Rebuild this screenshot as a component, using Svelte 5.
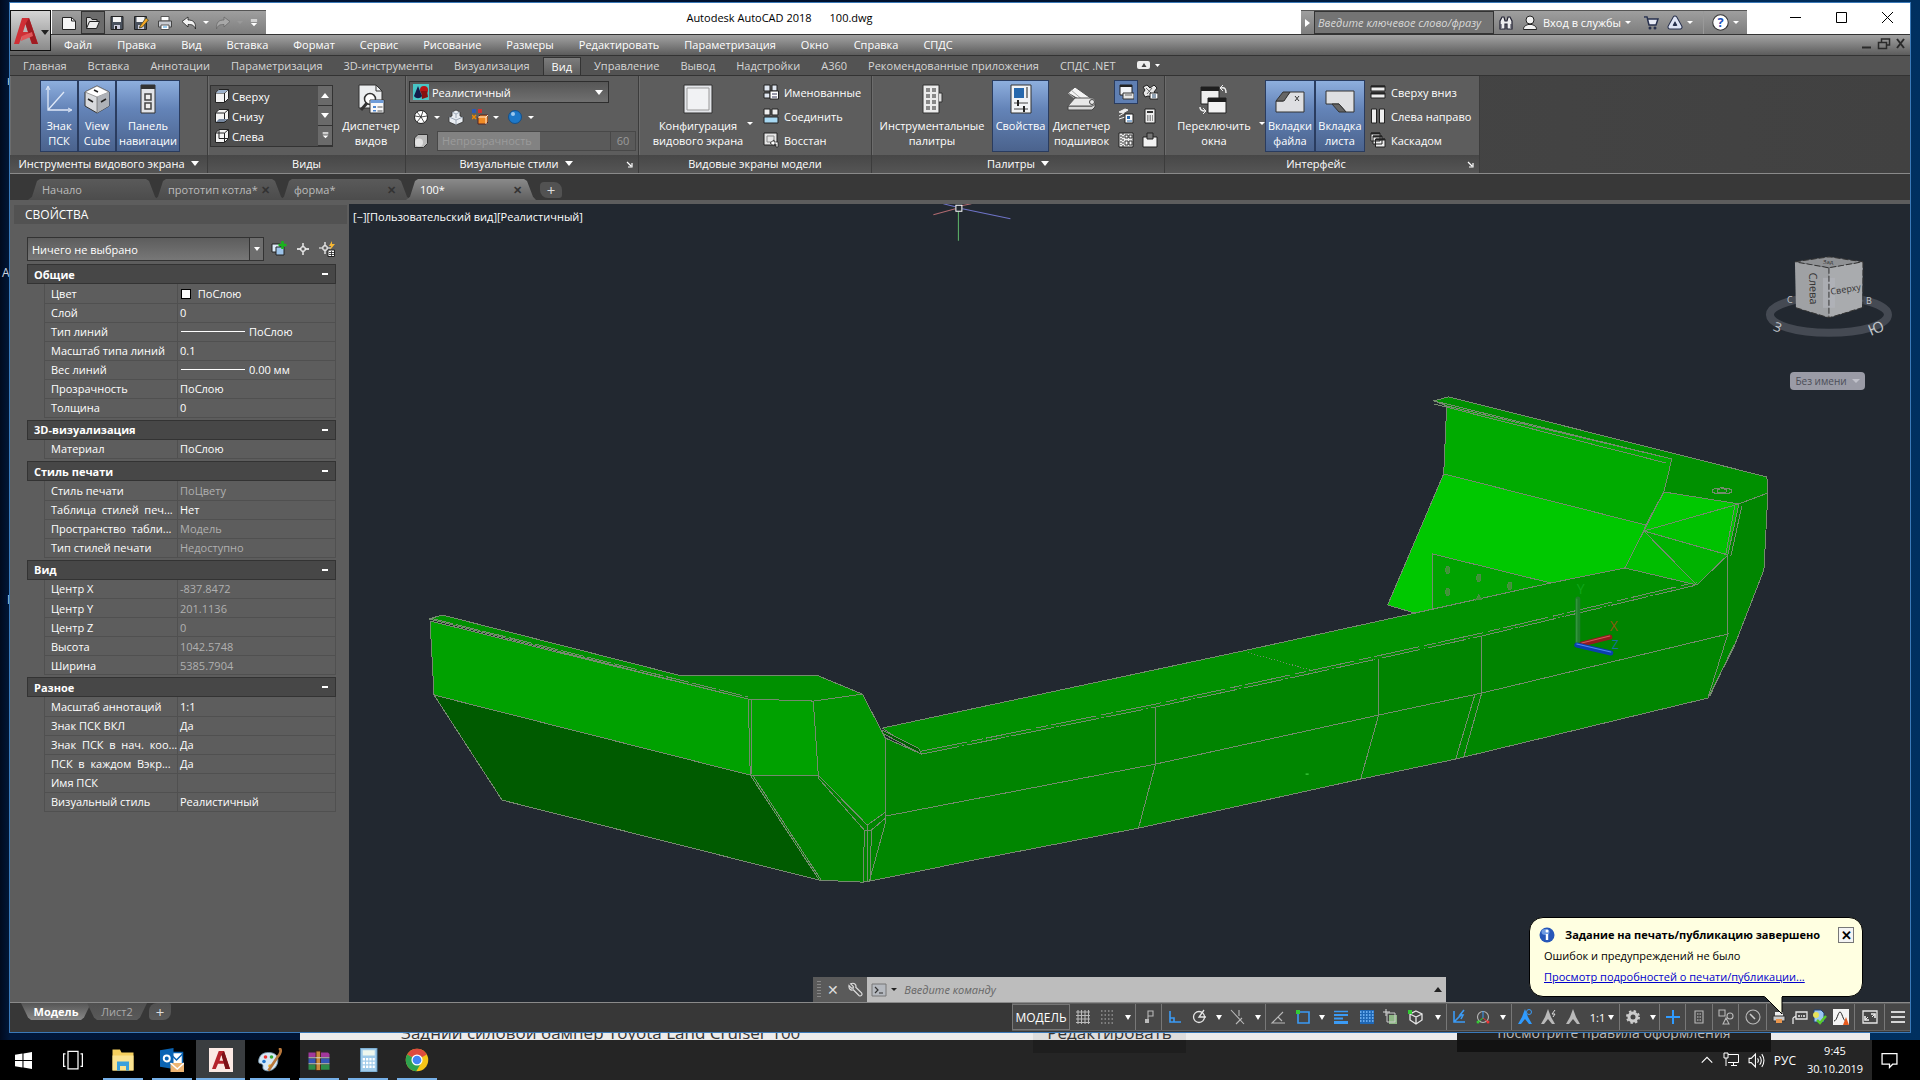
<script lang="ts">
  type Row = { name: string; value: string; dim?: boolean; kind?: string };

  const menus = ['Файл', 'Правка', 'Вид', 'Вставка', 'Формат', 'Сервис', 'Рисование', 'Размеры', 'Редактировать', 'Параметризация', 'Окно', 'Справка', 'СПДС'];
  const ribbonTabs = ['Главная', 'Вставка', 'Аннотации', 'Параметризация', '3D-инструменты', 'Визуализация', 'Вид', 'Управление', 'Вывод', 'Надстройки', 'A360', 'Рекомендованные приложения', 'СПДС .NET'];

  const groups: { title: string; rows: Row[] }[] = [
    {
      title: 'Общие',
      rows: [
        { name: 'Цвет', value: 'ПоСлою', kind: 'color' },
        { name: 'Слой', value: '0' },
        { name: 'Тип линий', value: 'ПоСлою', kind: 'line' },
        { name: 'Масштаб типа линий', value: '0.1' },
        { name: 'Вес линий', value: '0.00 мм', kind: 'line' },
        { name: 'Прозрачность', value: 'ПоСлою' },
        { name: 'Толщина', value: '0' }
      ]
    },
    { title: '3D-визуализация', rows: [{ name: 'Материал', value: 'ПоСлою' }] },
    {
      title: 'Стиль печати',
      rows: [
        { name: 'Стиль печати', value: 'ПоЦвету', dim: true },
        { name: 'Таблица  стилей  печ...', value: 'Нет' },
        { name: 'Пространство  табли...', value: 'Модель', dim: true },
        { name: 'Тип стилей печати', value: 'Недоступно', dim: true }
      ]
    },
    {
      title: 'Вид',
      rows: [
        { name: 'Центр X', value: '-837.8472', dim: true },
        { name: 'Центр Y', value: '201.1136', dim: true },
        { name: 'Центр Z', value: '0', dim: true },
        { name: 'Высота', value: '1042.5748', dim: true },
        { name: 'Ширина', value: '5385.7904', dim: true }
      ]
    },
    {
      title: 'Разное',
      rows: [
        { name: 'Масштаб аннотаций', value: '1:1' },
        { name: 'Знак ПСК ВКЛ', value: 'Да' },
        { name: 'Знак  ПСК  в  нач.  коо...', value: 'Да' },
        { name: 'ПСК  в  каждом  Вэкр...', value: 'Да' },
        { name: 'Имя ПСК', value: '' },
        { name: 'Визуальный стиль', value: 'Реалистичный' }
      ]
    }
  ];

  // icon, cell width, ends a group
  const status: [string, number, boolean][] = [
    ['grid', 26, false], ['snap', 24, false], ['arrow', 16, true],
    ['infer', 26, true], ['ortho', 25, false], ['polar', 25, false], ['arrow', 14, false],
    ['iso', 24, false], ['arrow', 16, true], ['angle', 24, false], ['osnap', 25, false], ['arrow', 13, false],
    ['weight', 26, false], ['transp', 25, false], ['cycle', 24, false], ['osnap3d', 26, false], ['arrow', 18, true],
    ['ducs', 23, false], ['gizmo', 25, false], ['arrow', 17, true],
    ['annoA', 25, false], ['annoB', 24, false], ['annoC', 24, false], ['scale', 35, true],
    ['gear', 26, false], ['arrow', 14, true], ['plus', 26, true], ['units', 27, true], ['isolate', 26, true], ['perf', 28, true],
    ['plot', 23, false], ['xref', 20, false], ['trust', 18, false], ['graph', 27, true], ['full', 30, true], ['burger', 25, false]
  ];

  const w = 'fill="none" stroke="#e6e6e6" stroke-width="1.3"';
  const b = 'fill="none" stroke="#3b9bf5" stroke-width="1.6"';
  const g = 'fill="none" stroke="#b9b9b9" stroke-width="1.1"';
  const k = 'stroke="#222"';

  const icons: Record<string, string> = {
    new: `<path d="M1.500 2.500h9l4 3.500v8.500h-13z" fill="#f5f5f5" ${k}/><path d="M10.500 2.500v3.500h4" fill="none" ${k}/>`,
    open: `<path d="M1.500 13.500v-11h4l1.500 2h5v2" fill="#ddd" ${k}/><path d="M1.500 13.500l3-7h10l-3 7z" fill="#eee" ${k}/>`,
    save: `<path d="M2 1.500h12v13H2z" fill="#4a525e" stroke="#222"/><path d="M4 2h8v5H4z" fill="#f4f4f4"/><path d="M5 10h6v4H5z" fill="#ccd"/><path d="M6 11h2v3H6z" fill="#222"/>`,
    saveas: `<path d="M1.500 1.500h12v13h-12z" fill="#4a525e" stroke="#222"/><path d="M3.500 2h8v5h-8z" fill="#f4f4f4"/><path d="M5 10h6v4H5z" fill="#ccd"/><path d="M7 11l6-8 2.500 2-6 7-3 1z" fill="#f5a623" stroke="#553"/>`,
    print: `<path d="M4 1.500h8V6H4z" fill="#fff" stroke="#555"/><path d="M1.500 6h13v6h-13z" fill="#c9ccd2" stroke="#444"/><path d="M4 10h8v4.500H4z" fill="#fff" stroke="#555"/><path d="M6 12h4" stroke="#3a9be0"/>`,
    undo: `<path d="M1 6.500l6-4.500v3c5 0 8 2 7.500 9-1.500-4-3.500-4.500-7.500-4.500v2.500z" fill="#f2f2f2" ${k} stroke-width=".8"/>`,
    redo: `<path d="M15 6.500L9 2v3c-5 0-8 2-7.500 9C3 10 5 9.500 9 9.500V12z" fill="#a8a8a8" stroke="#6a6a6a" stroke-width=".8"/>`,
    more: `<path d="M3 3h10M3 5h10" stroke="#fff" stroke-width="1.500"/><path d="M3 8h10l-5 5z" fill="#fff"/>`,
    find: `<path d="M2 14V6l2-4h2l1 4h2l1-4h2l2 4v8H9V9H7v5z" fill="#eee" stroke="#223" stroke-width="1.200"/><path d="M3 9v4M13 9v4" stroke="#334"/>`,
    user: `<circle cx="8" cy="5" r="4" fill="#f2f2f2" stroke="#222"/><path d="M1.500 14.500c0-4 3-4 4.500-5h4c1.500 1 4.500 1 4.500 5z" fill="#f2f2f2" stroke="#222"/>`,
    cart: `<path d="M1 2h3l2 8h7l2-6H5" fill="#e8ebf5" stroke="#27304d" stroke-width="1.500"/><circle cx="7" cy="13" r="1.500" fill="#27304d"/><circle cx="12" cy="13" r="1.500" fill="#27304d"/>`,
    a360: `<path d="M8 3l5 9H3z" fill="none" stroke="#27304d" stroke-width="5" stroke-linejoin="round"/><path d="M8 3l5 9H3z" fill="none" stroke="#dfe5f5" stroke-width="3" stroke-linejoin="round"/><path d="M8 7l2 4H6z" fill="#27304d"/>`,
    help: `<circle cx="8" cy="8" r="7.300" fill="#fff" stroke="#333"/><text x="8" y="12" text-anchor="middle" font-size="12" font-weight="bold" fill="#1d50b8">?</text>`,
    ucs: `<path d="M4 3v23h23M4 26L20 8" fill="none" stroke="#dfe8f7" stroke-width="1.300"/><path d="M2 6l2-4 2 4M24 24l4 2-4 2" fill="none" stroke="#dfe8f7"/>`,
    cube: `<path d="M15 2l12 6v14l-12 7-12-7V8z" fill="#d9dbde" stroke="#333"/><path d="M15 2l12 6-12 5L3 8z" fill="#fff" stroke="#777" stroke-width=".7"/><path d="M15 13v16l12-7V8z" fill="#aeb2b8"/><path d="M15 13v16" stroke="#666" stroke-width=".7"/><path d="M12 6l4 2M6 15l5 3M19 18l5-3" stroke="#222" stroke-width="1.500"/>`,
    nav: `<path d="M8 1h14v28H8z" fill="#e2e4e8" stroke="#333"/><path d="M8 1h14v4H8z" fill="#333"/><path d="M12 10h6v6h-6zM12 19h6v6h-6z" fill="#eee" stroke="#444" stroke-width="1.500"/>`,
    views: `<path d="M3 1h17l6 6v17H3z" fill="#eceef0" stroke="#333"/><path d="M20 1v6h6" fill="none" stroke="#333"/><circle cx="14" cy="15" r="5.500" fill="#fff" stroke="#333" stroke-width="1.500"/><path d="M11 19l-6 7" stroke="#333" stroke-width="3"/><path d="M14 16h14v13H14z" fill="#f6f7f9" stroke="#333"/><path d="M14.500 16h13v3h-13z" fill="#6d9bd8"/><path d="M17 22h3v2h-3zM17 26h3v1.500h-3z" fill="#4a84cf"/><path d="M21.500 23h5M21.500 27h5" stroke="#555"/>`,
    vp: `<path d="M1 1h28v28H1z" fill="#e4e6ea" stroke="#333"/><path d="M4 4h22v22H4z" fill="#f1f2f4" stroke="#999"/>`,
    toolpal: `<path d="M6 1h16v28H6z" fill="#ececec" stroke="#333"/><path d="M22 9h3v9h-3" fill="#ddd" stroke="#333"/><path d="M9 4h4v4H9zM15 4h4v4h-4zM9 10h4v4H9zM15 10h4v4h-4zM9 16h4v4H9zM15 16h4v4h-4zM9 22h4v4H9zM15 22h4v4h-4z" fill="#888"/>`,
    props: `<path d="M5 1h20v28H5z" fill="#f1f3f6" stroke="#333"/><path d="M8 4h10v10H8z" fill="#2768ad"/><path d="M21 3v11" stroke="#888" stroke-width="2"/><path d="M8 19h14M8 25h14" stroke="#444"/><path d="M12 16v6M18 22v6" stroke="#222" stroke-width="2"/>`,
    sheets: `<path d="M1 9l7-6 17 12v8z" fill="#f4f4f4" stroke="#555"/><path d="M1 9l11 9M4 6l13 11" stroke="#aaa"/><path d="M1 22h24l3-3v4l-3 3H1z" fill="#d7d7d7" stroke="#444"/><path d="M8 14L1 22h24c5-1 4-8-1-8z" fill="#e8e8e8" stroke="#555"/><circle cx="25" cy="18" r="2.500" fill="none" stroke="#444"/>`,
    swwin: `<path d="M2 3h18v17H2z" fill="#eee" stroke="#222"/><path d="M2 3h18v4H2z" fill="#1e1e1e"/><path d="M9 14h18v15H9z" fill="#f3f3f3" stroke="#222"/><path d="M9 14h18v4H9z" fill="#1e1e1e"/><path d="M22 4c4-1 5 1 5 5M1 23c0 3 2 4 5 4" fill="none" stroke="#eee" stroke-width="1.500"/><path d="M24 1l-3 3 3 3M4 24l3 3-3 3" fill="none" stroke="#eee"/>`,
    filetab: `<path d="M1 28V17h7l7-9h14v20z" fill="#dedfe2" stroke="#333"/><path d="M1 17l7-9h7l-6 9z" fill="#666" stroke="#333"/><path d="M20 12l4 5M24 12l-4 5" stroke="#333"/>`,
    laytab: `<path d="M1 7h28v21h-8l-7-8H1z" fill="#dedfe2" stroke="#333"/><path d="M7 20h7l7 8h-7z" fill="#666" stroke="#333"/>`,
    top: `<path d="M5 1.500h9.500v9L10.500 14.500h-9V5z" fill="#f4f4f4" stroke="#222"/><path d="M1.500 5H10.500V14.500M10.500 5l4-3.500" fill="none" stroke="#222"/><path d="M5 2l9 0-4 3H2z" fill="#9db2cc"/>`,
    bottom: `<path d="M5 1.500h9.500v9L10.500 14.500h-9V5z" fill="#f4f4f4" stroke="#222"/><path d="M1.500 5H10.500V14.500M10.500 5l4-3.500" fill="none" stroke="#222"/><path d="M5 11h9l-4 3H2z" fill="#7788a0"/>`,
    left: `<path d="M5 1.500h9.500v9L10.500 14.500h-9V5z" fill="#f4f4f4" stroke="#222"/><path d="M1.500 5H10.500V14.500M10.500 5l4-3.500M5 1.500v9M5 10.500H14" fill="none" stroke="#222"/>`,
    real: `<path d="M0 0h16v16H0z" fill="#48c6c6"/><circle cx="11" cy="6" r="4" fill="#b81313"/><path d="M8 7h6l1 6-6 2z" fill="#861010"/><path d="M5 2l4 10c-2 3-6 3-8 0z" fill="#141a4a"/>`,
    shade: `<circle cx="8" cy="8" r="6.500" fill="#fff" stroke="#222"/><path d="M8 8L4 3M8 8l2-6M8 8l6-1M8 8l3 5M8 8l-4 5M8 8L2 7" stroke="#222" stroke-width=".8"/>`,
    cubes: `<path d="M8 1l4 2v4l3 1v5l-7 3-7-3V8l3-1V3z" fill="#e9edf2" stroke="#333" stroke-width=".8"/><path d="M4 3l4 2 4-2M8 5v4M1 8l7 3 7-3M8 11v5" fill="none" stroke="#8a97a8" stroke-width=".8"/>`,
    mats: `<path d="M0 0h4v4H0z" fill="#2c59b5"/><path d="M6 0h4v4H6z" fill="#c33"/><path d="M0 6l4 4M4 6l-4 4" stroke="#e80" stroke-width="1.500"/><path d="M6 8l2-2h8v7l-2 2H6z" fill="#f08a24" stroke="#522"/><path d="M6 8h8v7M14 8l2-2" fill="none" stroke="#fff" stroke-width=".8"/>`,
    sphere: `<circle cx="8" cy="8" r="6.500" fill="#1e78c8" stroke="#155089"/><circle cx="6" cy="5" r="2" fill="#9cc8ee"/>`,
    opac: `<path d="M5 1.500h9.500v9L10.500 14.500h-9V5z" fill="#bbb" stroke="#333"/><circle cx="6" cy="9.500" r="4" fill="#e2e2e2"/>`,
    named: `<path d="M1 1h6v6H1zM9 1h5v6H9zM1 9h6v5H1z" fill="#dfe6f0" stroke="#222"/><path d="M7 7h8.500v8H7z" fill="#fff" stroke="#222"/><path d="M9 10h5M9 13h5" stroke="#335"/>`,
    join: `<path d="M1 1h6v6H1zM9 1h6v6H9z" fill="#eee" stroke="#222"/><path d="M1 9h14v6H1z" fill="#a7d8f2" stroke="#222"/>`,
    restore: `<path d="M1 1h13v12H1z" fill="#e6e6e6" stroke="#222"/><path d="M4 4h7v6H4z" fill="none" stroke="#888"/><path d="M7 11l4-3v2h4v5h-2v-3h-2v2z" fill="#fff" stroke="#222" stroke-width=".8"/>`,
    tile: `<path d="M1 2h14v5H1zM1 9h14v5H1z" fill="#eee" stroke="#222"/><path d="M1 2.500h14M1 9.500h14" stroke="#222" stroke-width="2"/>`,
    tilev: `<path d="M1.500 1h5v14h-5zM9.500 1h5v14h-5z" fill="#eee" stroke="#222"/>`,
    cascade: `<path d="M1 1h9v8H1zM3 4h9v8H3zM5.500 7H15v8H5.500z" fill="#eee" stroke="#222"/><path d="M1 1.500h9M3 4.500h9M6 7.500h9" stroke="#222" stroke-width="2"/>`,
    p1: `<path d="M2 1h12v10H2z" fill="#f2f4f8" stroke="#222"/><path d="M2 2h12" stroke="#222" stroke-width="2"/><path d="M5 9h11v6H5z" fill="#e4e4e4" stroke="#333"/><path d="M7 11h7" stroke="#666"/>`,
    p2: `<path d="M1 3l4-2 3 3 4-3 3 3-3 4 2 3-4 2-4-1-3 1-2-4 2-3z" fill="#e8e8e8" stroke="#222"/><path d="M4 4l6 6M10 4l-5 6" stroke="#333" stroke-width=".7"/><path d="M8 9h8v6H8z" fill="#fff" stroke="#222"/><path d="M10 11h4M10 13h4" stroke="#246"/>`,
    p3: `<path d="M1 4l6-3 3 1-5 3zM1 8l5-3M1 11l6-2" fill="#eee" stroke="#eee"/><path d="M7 6h8v9H7z" fill="#fff" stroke="#222"/><path d="M9 8h3v3H9z" fill="#2768ad"/><path d="M9 13h5" stroke="#2768ad"/>`,
    p4: `<path d="M3 1h10v14H3z" fill="#eee" stroke="#222"/><path d="M5 3h6v2H5z" fill="#333"/><path d="M5 8h6M5 10h6M5 12h6" stroke="#333" stroke-dasharray="1.500 1"/>`,
    p5: `<path d="M1 1h14v14H1z" fill="#eee" stroke="#222"/><path d="M3 3v10M5 1v14" stroke="#333" stroke-dasharray="2 1"/><path d="M7 3h3v3H7zM11 3h3v3h-3zM7 9h3v4H7zM11 9h3v4h-3z" fill="#fff" stroke="#333"/>`,
    p6: `<path d="M1 5h14v10H1z" fill="#f2f2f2" stroke="#222"/><path d="M5 1h6v6H5z" fill="#777" stroke="#222"/>`,
    pick1: `<path d="M1 3h8v8H1z" fill="#dceaf7" stroke="#222"/><path d="M5 6h8v8H5z" fill="#9cc3ea" stroke="#222"/><path d="M11.500 0v8M7.500 4h8" stroke="#18b51c" stroke-width="2.500"/>`,
    pick2: `<path d="M8 2v12M2 8h12" stroke="#fff" stroke-width="1.300"/><path d="M6 6h4v4H6z" fill="#5d5d5d" stroke="#fff"/>`,
    pick3: `<path d="M6 1v12M0 7h12" stroke="#fff" stroke-width="1.200"/><path d="M4 5h4v4H4z" fill="#5d5d5d" stroke="#fff"/><path d="M13 0l-3 5h2l-1 4 5-6h-3z" fill="#f7b733"/><path d="M9 9h6.500v6.500H9z" fill="#fff" stroke="#222"/><path d="M10 11.500h5M10 13.500h5M12.500 10v5" stroke="#222" stroke-width=".8"/>`,
    grid: `<path d="M1 3h14M1 6.500h14M1 10h14M1 13.500h14M3 1v14M6.500 1v14M10 1v14M13.500 1v14" ${g}/>`,
    snap: `<path d="M1 2h14M1 6h14M1 10h14M1 14h14" ${g} stroke-dasharray="1.500 2"/>`,
    arrow: '',
    infer: `<path d="M7 2h5v5H7zM7 2v9" ${g}/><path d="M4 10h4v4H4z" fill="#bbb"/>`,
    ortho: `<path d="M3 2v11h11M3 9h4v4" ${b}/>`,
    polar: `<circle cx="7" cy="8" r="5.500" ${w}/><path d="M14 8H7l5-7" ${w}/>`,
    iso: `<path d="M1 1l13 14M9 1v6M12 9L6 15" ${g}/>`,
    angle: `<path d="M15 14H2L13 3M8 8l4 4" ${g}/>`,
    osnap: `<path d="M3 3h11v11H3z" ${b}/><path d="M1 1h4v4H1z" fill="#3c3"/>`,
    weight: `<path d="M1 2.500h14" stroke="#3b9bf5" stroke-width="1.500"/><path d="M1 6h14M1 9.500h9" stroke="#3b9bf5" stroke-width="2"/><path d="M1 13.500h14" stroke="#3b9bf5" stroke-width="3"/>`,
    transp: `<path d="M1 1h14v14H1z" fill="#1f67b5"/><path d="M1 3h14M1 6h14M1 9h14M1 12h14" stroke="#7fc0ff" stroke-width="1.500" stroke-dasharray="1.500 1.500"/>`,
    cycle: `<path d="M6 6h8v9H6z" fill="#8fb886"/><path d="M4 4h8v9H4z" fill="none" stroke="#ccc"/><path d="M3 0v7M0 3h7" stroke="#ddd"/>`,
    osnap3d: `<path d="M8 2l6 3v6l-6 4-6-4V5zM2 5l6 3 6-3M8 8v7" ${w}/><path d="M0 1h4v4H0z" fill="#3c3"/>`,
    ducs: `<path d="M3 2v11h11M3 13l8-8" ${b}/><path d="M13 1l-4 5h3l-2 4" ${b}/>`,
    gizmo: `<circle cx="8" cy="8" r="5.500" ${g}/><path d="M8 2v7" stroke="#3b9bf5"/><path d="M8 9l-5 4" stroke="#3c3"/><path d="M8 9l5 4" stroke="#e33"/><circle cx="3" cy="13" r="1.500" fill="#3c3"/><circle cx="13" cy="13" r="1.500" fill="#e33"/>`,
    annoA: `<path d="M8 0l3 8 4 7h-3l-4-5-4 5H1l4-7z" fill="#2f9bff"/><circle cx="12" cy="3" r="2.500" fill="none" stroke="#3b9bf5"/>`,
    annoB: `<path d="M7 0l3 8 4 7h-3l-4-5-4 5H0l4-7z" fill="#b9b9b9"/><path d="M14 1l-3 4h3l-2 3" fill="none" stroke="#ddd"/>`,
    annoC: `<path d="M8 0l3 8 4 7h-3l-4-5-4 5H1l4-7z" fill="#b9b9b9"/>`,
    gear: `<circle cx="8" cy="8" r="4" fill="none" stroke="#ccc" stroke-width="3"/><circle cx="8" cy="8" r="6" fill="none" stroke="#ccc" stroke-width="2" stroke-dasharray="2.400 2.300"/>`,
    plus: `<path d="M8 1v14M1 8h14" stroke="#2f9bff" stroke-width="2"/>`,
    units: `<path d="M4 2h8v12H4z" ${g}/><path d="M6 5h4M6 8h4M6 11h4" stroke="#ccc" stroke-dasharray="1 .5"/>`,
    isolate: `<path d="M1 1h6v6H1zM5 15l3-6 3 6z" ${g}/><circle cx="12" cy="7" r="3" ${g}/>`,
    perf: `<circle cx="8" cy="8" r="7" ${g}/><path d="M5 5l5 5" stroke="#ccc" stroke-width="1.500"/>`,
    plot: `<path d="M4 3h8v4H4z" fill="#eee"/><path d="M2 7h12v5H2z" fill="#c9c9c9" stroke="#333"/><path d="M5 10h6v4H5z" fill="#e9954c"/>`,
    xref: `<path d="M1 15V9M4 3h11v7H4zM1 9l3-2" ${w}/><path d="M6 7h2M9 7h1M11 7h2" stroke="#eee" stroke-width="1.500"/>`,
    trust: `<path d="M3 1h7l3 3v9H3z" fill="#9cc8f2" stroke="#247"/><circle cx="5" cy="6" r="3" fill="#e7e35a"/><path d="M6 11l3 3 6-7" fill="none" stroke="#5acb2c" stroke-width="2.500"/>`,
    graph: `<path d="M0 0h16v16H0z" fill="#f4f4f4"/><path d="M1 12c3 0 4-9 6-9s3 9 6 9" fill="none" stroke="#222"/><path d="M13 8l3 8h-6z" fill="#e65a1e"/>`,
    full: `<path d="M1 2h14v12H1z" ${w}/><path d="M9 5h4v4M7 11H3V7" fill="none" stroke="#eee" stroke-width="1.600"/><path d="M13 5l-3 3M3 11l3-3" stroke="#eee"/>`,
    burger: `<path d="M1 3h14M1 8h14M1 13h14" stroke="#d5d5d5" stroke-width="2"/>`,
    win: `<path d="M0 2.500l7-1v6H0zM8 1.300L16 0v7.500H8zM0 8.500h7v6l-7-1zM8 8.500h8V16l-8-1.300z" fill="#fff"/>`,
    task: `<path d="M4 1h8v14H4zM2 3H.5v10H2M14 3h1.500v10H14" fill="none" stroke="#fff" stroke-width="1"/>`,
    explorer: `<path d="M1 1h5l1 2h8v12H1z" fill="#f5cf5e"/><path d="M1 5h14v10H1z" fill="#fbe391"/><path d="M4 15V9h8v6h-2v-3H6v3z" fill="#3aa0dc"/>`,
    outlook: `<path d="M7 3h8v8H7z" fill="#fff" stroke="#0a64b4"/><path d="M7 4l4 4 4-4" fill="none" stroke="#0a64b4"/><path d="M0 1.500L9 0v14l-9-1.500z" fill="#0a64b4"/><circle cx="4.500" cy="7" r="2" fill="none" stroke="#fff" stroke-width="1.300"/><path d="M7 10h9v6H7z" fill="#eeb573"/><path d="M7 10l4.500 4L16 10" fill="none" stroke="#fff"/>`,
    acad: `<path d="M0 0h16v16H0z" fill="#fbe9e4"/><path d="M6.500 2h3.500l4 12h-3l-1-3.500H6L4.500 14H2z" fill="#b5222b"/><path d="M7 8.500h2.500L8.300 4.500z" fill="#fbe9e4"/><path d="M10 2l4 12h-3L8.300 4.500z" fill="#7c1218"/>`,
    paint: `<path d="M7 3c5 0 7 3 6 7s-5 6-8 5-1-3-2-4-3 0-2.500-3S3 3 7 3z" fill="#d6e8f5" stroke="#7695ad" stroke-width=".6"/><circle cx="5" cy="6" r="1.200" fill="#e33"/><circle cx="9" cy="6" r="1.200" fill="#3a3"/><circle cx="4" cy="9" r="1.200" fill="#27c"/><circle cx="8" cy="12" r="1.200" fill="#ea2"/><path d="M14 0c2 1 1 4-1 6l-6 9" fill="none" stroke="#b9773b" stroke-width="1.800"/>`,
    rar: `<path d="M1 3h13l1 1v2H1z" fill="#a2379b"/><path d="M1 7h14v3H1z" fill="#3556b5"/><path d="M1 11h14v3.500H1z" fill="#2d8c48"/><path d="M6 2h3v13H6z" fill="#c98a3d" stroke="#421" stroke-width=".6"/><path d="M1 6.500h14M1 10.500h14" stroke="#ddd" stroke-width=".6"/>`,
    calc: `<path d="M3 0h11v16H3z" fill="#9fcbea" stroke="#5c93bb" stroke-width=".6"/><path d="M4.500 1.500h8v3.500h-8z" fill="#eef7ee"/><path d="M4.500 7.500h8M4.500 10h8M4.500 12.500h8" stroke="#fff" stroke-width="1.600" stroke-dasharray="1.500 .7"/>`,
    chrome: `<circle cx="8" cy="8" r="7.500" fill="#f5c518"/><path d="M8 8L1.500 4.250A7.500 7.500 0 0 1 14.500 4.250z" fill="#dd4b3e"/><path d="M1.500 4.250A7.500 7.500 0 0 0 7.500 15.500L11 9.500 8 8z" fill="#2ea24f"/><circle cx="8" cy="8" r="3.700" fill="#fff"/><circle cx="8" cy="8" r="2.900" fill="#4285f4"/>`,
    up: `<path d="M2 11l6-6 6 6" fill="none" stroke="#fff" stroke-width="1.300"/>`,
    net: `<path d="M5 2.500h10.500v8H5M8 13.500h6M10.500 11v3M1 1h4v5H1zM3 6v8" fill="none" stroke="#fff"/>`,
    vol: `<path d="M1 6h2l4-4v12l-4-4H1z" fill="none" stroke="#fff"/><path d="M9 6q1.500 2 0 4M11 4q3 4 0 8M13 2q4 6 0 12" fill="none" stroke="#fff"/>`,
    note: `<path d="M1 1.500h14v10h-4l-3 3v-3H1z" fill="none" stroke="#fff" stroke-width="1.200"/>`,
    wrench: `<path d="M2 1l3 3 0 2-2 0-3-3c-.5 4 2 6 5 5l7 7c2 1 4-1 3-3L8 5c1-3-2-6-6-4z" transform="translate(1 1) scale(.85)" fill="none" stroke="#ddd" stroke-width="1.400"/>`,
    prompt: `<path d="M1 2h14v12H1z" fill="#b5b9bf" stroke="#777"/><path d="M4 5l3 3-3 3M8 11h4" fill="none" stroke="#333" stroke-width="1.200"/>`,
    info: `<circle cx="8" cy="8" r="7.500" fill="#2757b8"/><ellipse cx="6.500" cy="5" rx="4" ry="3" fill="#6f9be2"/><path d="M8 7v6" stroke="#fff" stroke-width="2.400"/><circle cx="8" cy="4" r="1.500" fill="#fff"/>`
  };

  const tasks = ['explorer', 'outlook', 'acad', 'paint', 'rar', 'calc', 'chrome'];
  let docTab = $state('100*');
  let balloon = $state(true);
</script>

{#snippet icon(name: string, size: number)}
  <svg class="icon" width={size} height={size} viewBox={size >= 28 ? '0 0 30 30' : '0 0 16 16'} aria-hidden="true">{@html icons[name]}</svg>
{/snippet}

{#snippet big(name: string, l1: string, l2: string, on: boolean)}
  <button class="big" class:on>
    {@render icon(name, 30)}
    <span>{l1}<br />{l2}</span>
  </button>
{/snippet}

<div class="desktop">
  <span class="stray s1">к</span>
  <span class="stray s2">А</span>
  <span class="stray s3">П</span>
  <div class="window">
    <header class="caption">
      <div class="qat">
        <button aria-label="Создать">{@render icon('new', 16)}</button>
        <button class="hot" aria-label="Открыть">{@render icon('open', 16)}</button>
        <button aria-label="Сохранить">{@render icon('save', 16)}</button>
        <button aria-label="Сохранить как">{@render icon('saveas', 16)}</button>
        <button aria-label="Печать">{@render icon('print', 16)}</button>
        <button aria-label="Отменить">{@render icon('undo', 16)}</button>
        <i class="dd"></i>
        <button aria-label="Повторить">{@render icon('redo', 16)}</button>
        <i class="dd dim"></i>
        <button class="end" aria-label="Настройка панели">{@render icon('more', 10)}</button>
      </div>
      <div class="title"><span>Autodesk AutoCAD 2018</span><span>100.dwg</span></div>
      <div class="infocenter">
        <i class="play"></i>
        <input aria-label="Поиск" placeholder="Введите ключевое слово/фразу" />
        <button aria-label="Найти">{@render icon('find', 16)}</button>
        <button class="login">{@render icon('user', 16)}Вход в службы<i class="dd"></i></button>
        <button class="wide" aria-label="Магазин">{@render icon('cart', 16)}</button>
        <button class="wide" aria-label="A360">{@render icon('a360', 16)}<i class="dd"></i></button>
        <button class="helpbtn" aria-label="Справка">{@render icon('help', 17)}<i class="dd"></i></button>
      </div>
      <div class="winctl">
        <button aria-label="Свернуть"><svg width="11" height="11"><path d="M0 5.500h11" stroke="#000" /></svg></button>
        <button aria-label="Развернуть"><svg width="11" height="11"><path d="M.5.5h10v10H.5z" fill="none" stroke="#000" /></svg></button>
        <button aria-label="Закрыть"><svg width="11" height="11"><path d="M0 0l11 11M11 0L0 11" stroke="#000" /></svg></button>
      </div>
    </header>
    <button class="appbtn" aria-label="Меню приложения">
      <svg width="26" height="28" viewBox="0 0 26 28"><path d="M9 1h7l9 26h-6l-3-8H9l-3 8H1z" fill="#cf2f35" /><path d="M10 15h5l-2.500-8z" fill="#b9b9b9" /><path d="M16 1l9 26h-6L12.500 7z" fill="#a01c22" /><path d="M9 19l10-4 1 4-12 5z" fill="#e0575a" /></svg>
      <i class="dd dark"></i>
    </button>

    <nav class="menubar">
      {#each menus as m}<button>{m}</button>{/each}
      <span class="mdi">
        <svg width="44" height="12" viewBox="0 0 44 12"><path d="M0 9.500h9" stroke="#2a2a2a" stroke-width="2" /><path d="M19.500 4V1h8v6h-3M16.500 4.500h8v6h-8z" fill="none" stroke="#2a2a2a" stroke-width="1.500" /><path d="M35 1l7 9M42 1l-7 9" stroke="#2a2a2a" stroke-width="2" /></svg>
      </span>
    </nav>

    <nav class="rtabs">
      {#each ribbonTabs as t}<button class:active={t === 'Вид'}>{t}</button>{/each}
      <button class="rmin" aria-label="Свернуть ленту"><svg width="24" height="10" viewBox="0 0 24 10"><rect x="0" y="1" width="13" height="8" rx="2" fill="#eee" /><path d="M4.500 7h5l-2.500-4z" fill="#444" /><path d="M18 4h5l-2.500 3z" fill="#fff" /></svg></button>
    </nav>

    <section class="ribbon">
      <div class="panel p-tools">
        <div class="body">
          {@render big('ucs', 'Знак', 'ПСК', true)}
          {@render big('cube', 'View', 'Cube', true)}
          {@render big('nav', 'Панель', 'навигации', true)}
        </div>
        <footer>Инструменты видового экрана<i class="tri"></i></footer>
      </div>
      <div class="panel p-views">
        <div class="body">
          <div class="gallery">
            <div class="items">
              <button>{@render icon('top', 16)}Сверху</button>
              <button>{@render icon('bottom', 16)}Снизу</button>
              <button>{@render icon('left', 16)}Слева</button>
            </div>
            <div class="scroll">
              <button aria-label="Вверх"><i class="tri up"></i></button>
              <button aria-label="Вниз"><i class="tri"></i></button>
              <button aria-label="Ещё">{@render icon('more', 9)}</button>
            </div>
          </div>
          {@render big('views', 'Диспетчер', 'видов', false)}
        </div>
        <footer>Виды</footer>
      </div>
      <div class="panel p-style">
        <div class="body col">
          <div class="combo">
            {@render icon('real', 16)}
            <select aria-label="Визуальный стиль"><option>Реалистичный</option></select>
            <i class="tri"></i>
          </div>
          <div class="row">
            <button aria-label="Тени">{@render icon('shade', 16)}<i class="dd"></i></button>
            <button aria-label="Грани">{@render icon('cubes', 16)}</button>
            <button aria-label="Материалы">{@render icon('mats', 16)}<i class="dd"></i></button>
            <button aria-label="Цвет граней">{@render icon('sphere', 16)}<i class="dd"></i></button>
          </div>
          <div class="row opacity">
            {@render icon('opac', 16)}
            <div class="slider"><span>Непрозрачность</span><b>60</b></div>
          </div>
        </div>
        <footer class="launch">Визуальные стили<i class="tri"></i>{@render launcher()}</footer>
      </div>
      <div class="panel p-vports">
        <div class="body">
          {@render big('vp', 'Конфигурация', 'видового экрана', false)}
          <i class="dd side"></i>
          <div class="list">
            <button>{@render icon('named', 16)}Именованные</button>
            <button>{@render icon('join', 16)}Соединить</button>
            <button>{@render icon('restore', 16)}Восстан</button>
          </div>
        </div>
        <footer>Видовые экраны модели</footer>
      </div>
      <div class="panel p-pal">
        <div class="body">
          {@render big('toolpal', 'Инструментальные', 'палитры', false)}
          {@render big('props', 'Свойства', '', true)}
          {@render big('sheets', 'Диспетчер', 'подшивок', false)}
          <div class="six">
            <button class="on" aria-label="Командная строка">{@render icon('p1', 16)}</button>
            <button aria-label="Пометки">{@render icon('p2', 16)}</button>
            <button aria-label="Слои">{@render icon('p3', 16)}</button>
            <button aria-label="Калькулятор">{@render icon('p4', 16)}</button>
            <button aria-label="Центр управления">{@render icon('p5', 16)}</button>
            <button aria-label="Ссылки">{@render icon('p6', 16)}</button>
          </div>
        </div>
        <footer>Палитры<i class="tri"></i></footer>
      </div>
      <div class="panel p-ui">
        <div class="body">
          {@render big('swwin', 'Переключить', 'окна', false)}
          <i class="dd side"></i>
          {@render big('filetab', 'Вкладки', 'файла', true)}
          {@render big('laytab', 'Вкладка', 'листа', true)}
          <div class="list">
            <button>{@render icon('tile', 16)}Сверху вниз</button>
            <button>{@render icon('tilev', 16)}Слева направо</button>
            <button>{@render icon('cascade', 16)}Каскадом</button>
          </div>
        </div>
        <footer class="launch">Интерфейс{@render launcher()}</footer>
      </div>
    </section>

    <nav class="doctabs">
      {#each ['Начало', 'прототип котла*', 'форма*', '100*'] as t, i}
        <button class:active={docTab === t} onclick={() => (docTab = t)}>{t}{#if i > 0}<span class="x">✕</span>{/if}</button>
      {/each}
      <button class="add" aria-label="Новая вкладка">+</button>
    </nav>

    <main>
      <aside>
        <h2>СВОЙСТВА</h2>
        <div class="pick">
          <select aria-label="Выбор объекта"><option>Ничего не выбрано</option></select>
          <span class="drop"><i class="tri"></i></span>
          <button aria-label="Переключить PICKADD">{@render icon('pick1', 16)}</button>
          <button aria-label="Выбрать объекты">{@render icon('pick2', 16)}</button>
          <button aria-label="Быстрый выбор">{@render icon('pick3', 16)}</button>
        </div>
        {#each groups as gr}
          <button class="cat">{gr.title}<i></i></button>
          <table>
            <tbody>
              {#each gr.rows as r}
                <tr>
                  <th>{r.name}</th>
                  <td class:dim={r.dim}>
                    {#if r.kind === 'color'}<i class="swatch"></i>{/if}
                    {#if r.kind === 'line'}<i class="ltype"></i>{/if}{r.value}
                  </td>
                </tr>
              {/each}
            </tbody>
          </table>
        {/each}
      </aside>

      <div class="viewport">
        <svg class="scene" viewBox="349 204 1560 798" preserveAspectRatio="xMidYMid slice">
          <g class="faces" stroke="#758a6f" stroke-width="1" shape-rendering="crispEdges">
            <!-- right wing -->
            <path d="M1433 401l15-4 318 80 1 16-29 11-75-12 8-33-225-53z" fill="#009000" />
            <path d="M1446 406l225 53-8 33-18 33-202-51z" fill="#00ab00" />
            <path d="M1443 474l202 51-2 6-19 37-74 15-136 30-27-8z" fill="#00c800" />
            <path d="M1432 554l118 29-118 26z" fill="#00a300" />
            <path d="M1433 401l238 58M1433 404l232 59" fill="none" />
            <path d="M1663 492l75 12-95 27z" fill="#00c800" />
            <path d="M1738 504l-11 51-84-24z" fill="#00c200" />
            <path d="M1643 531l84 24-31 30z" fill="#00b200" />
            <path d="M1643 531l53 54-72-17z" fill="#00bd00" />
            <path d="M1738 504l29-11-4 77-30 77-26 51 20-64v-79z" fill="#008600" />
            <path d="M1734 505l-9 49M1741 506l-11 50M1727 634l-3 8-17 56M1709 696l24-51" fill="none" />
            <ellipse cx="1721" cy="491" rx="10" ry="3" fill="none" /><ellipse cx="1721" cy="491" rx="5" ry="2" fill="none" />
            <!-- beam -->
            <path d="M882 728l360-77 173-38 135-30 74-15 72 17-215 51-103 23-61 13-162 35-234 47z" fill="#009000" />
            <path d="M882 733l39 21-3-6-36-18z" fill="#005f00" />
            <path d="M885 738l36 16 234-47 162-35 164-36 215-51 31-30v79l-246 59-103 22-223 49-270 52z" fill="#008400" stroke="none" />
            <path d="M885 738l36 16M1696 585l31-30v79l-246 59-103 22-223 49-270 52" fill="none" />
            <path d="M885 816l270-52 223-49 103-22 246-59-20 64-87 21-157 38-8 2-95 20-222 49-160 31-109 22z" fill="#008600" />
            <path d="M921 751l234-47 162-35 164-36 215-51" fill="none" stroke-dasharray="46 5 12 3" />
            <path d="M921 754l234-47 162-35 164-36 215-51" fill="none" stroke-dasharray="38 9" />
            <path d="M1155 707v57l-17 64M1378 659v56l-18 64M1481 636v57l-18 64M1474 695l-19 64" fill="none" />
            <path d="M1242 651l75 21" fill="none" stroke-dasharray="1 2" />
            <!-- left wing -->
            <path d="M429 619l13-4 236 60h138l46 19-49 7-65-2z" fill="#009000" />
            <path d="M430 621l318 78 2 76-316-80z" fill="#00a100" />
            <path d="M430 618l318 79" fill="none" stroke-dasharray="24 3" />
            <path d="M748 699l65 2 5 74h-68z" fill="#00a100" />
            <path d="M751 700v74" fill="none" />
            <path d="M434 695l316 80 69 105-317-80z" fill="#005b00" />
            <path d="M750 775h68l46 55-1 52-44-2z" fill="#008000" />
            <path d="M753 776l68 104" fill="none" />
            <path d="M813 701l49-7 23 44v74l-18 13-49-50z" fill="#009500" />
            <path d="M818 775l49 50 18-13v11l-16 58-6 1 1-52-46-52z" fill="#008500" />
            <path d="M867 825v56M871 830l-1 51M864 830l7 0 14-12" fill="none" />
          </g>
          <g fill="#3a9a30" stroke="#4f8a4a" shape-rendering="crispEdges">
            <ellipse cx="1447" cy="570" rx="2" ry="4" /><ellipse cx="1478" cy="578" rx="2" ry="4" /><ellipse cx="1509" cy="586" rx="2" ry="4" />
            <ellipse cx="1447" cy="592" rx="2" ry="4" /><path d="M1475 600l3-5 3 4z" />
          </g>
          <path d="M1305 774h3" stroke="#4fe04f" />
          <g stroke-linecap="round">
            <path d="M1577 599v44" stroke="#1f7f2a" stroke-width="5" /><path d="M1576 599v44" stroke="#3da045" />
            <path d="M1581 644l28-7" stroke="#8f1d1d" stroke-width="5" /><path d="M1581 643l28-7" stroke="#d35a5a" />
            <path d="M1576 645l34 8" stroke="#0b3fae" stroke-width="5" /><path d="M1576 644l34 8" stroke="#4f8bf0" />
          </g>
          <text x="1576" y="594" font-size="14" fill="#10a51a">Y</text>
          <text x="1609" y="631" font-size="14" fill="#8a5a12">X</text>
          <text x="1611" y="649" font-size="12" fill="#1a70a0">Z</text>
          <!-- crosshair -->
          <path d="M958 212v29" stroke="#5fb86a" /><path d="M962 209l48 10" stroke="#6f74c8" /><path d="M955 209l-22 6M961 206l10-2" stroke="#b06a70" /><path d="M943 204l12 3" stroke="#6f74c8" />
          <path d="M955.500 205.500h6v6h-6z" fill="none" stroke="#fff" />
          <!-- view cube -->
          <ellipse cx="1828" cy="315" rx="59" ry="18" fill="none" stroke="#454a53" stroke-width="8" />
          <g fill="#c4c8ce" font-size="13">
            <text x="1773" y="332" transform="rotate(20 1777 327)">З</text><text x="1867" y="334" font-size="15" transform="rotate(-22 1874 328)">Ю</text>
            <text x="1786" y="303" font-size="9">С</text><text x="1865" y="304" font-size="9">В</text>
          </g>
          <path d="M1794 262l34 6v50l-33-10z" fill="#9fa1a4" /><path d="M1828 268l34-6-1 46-33 10z" fill="#a9abae" /><path d="M1794 262l34-5 34 5-34 6z" fill="#8f9194" />
          <path d="M1822 278h12v30h-12z" fill="#b4b6bd" opacity=".6" />
          <path d="M1794 262l34-5 34 5-34 6zM1828 268v50M1795 308l33 10 33-10M1862 262v46" fill="none" stroke="#333" stroke-dasharray="6 2" />
          <text x="0" y="0" font-size="11" fill="#333" transform="translate(1808 273) rotate(88)">Слева</text>
          <text x="0" y="0" font-size="9" fill="#333" transform="translate(1830 295) rotate(-9)">Сверху</text>
          <text x="1822" y="264" font-size="6" fill="#333">Зад</text>
        </svg>
        <p class="vlabel">[−][Пользовательский вид][Реалистичный]</p>
        <button class="ucsname">Без имени<i></i></button>
        <div class="cmd">
          <span class="grip"></span>
          <button class="close" aria-label="Закрыть">✕</button>
          <button aria-label="Настройка">{@render icon('wrench', 16)}</button>
          <label>{@render icon('prompt', 16)}<i class="dd dark"></i><input placeholder="Введите команду" aria-label="Командная строка" /><i class="tri up dark"></i></label>
        </div>
      </div>
    </main>

    <div class="bottom">
      <div class="layouts">
        <button class="active">Модель</button>
        <button>Лист2</button>
        <button class="add" aria-label="Новый лист">+</button>
      </div>
      <div class="status">
        <button class="model">МОДЕЛЬ</button>
        {#each status as [name, width, end]}
          <button class:end style="width: {width}px" aria-label={name === 'scale' ? undefined : name}>
            {#if name === 'scale'}1:1<i class="tri"></i>{:else if name === 'arrow'}<i class="tri"></i>{:else}{@render icon(name, 16)}{/if}
          </button>
        {/each}
      </div>
    </div>
    {#if balloon}
      <div class="balloon">
        <div class="head">
          {@render icon('info', 16)}<b>Задание на печать/публикацию завершено</b>
          <button aria-label="Закрыть" onclick={() => (balloon = false)}>✕</button>
        </div>
        <p>Ошибок и предупреждений не было</p>
        <a href="#details">Просмотр подробностей о печати/публикации...</a>
        <svg class="tail" width="22" height="21" viewBox="0 0 22 21"><path d="M1 1l18 18V1" fill="#ffffe1" stroke="#000" /><path d="M1 0h18v2H2z" fill="#ffffe1" /></svg>
      </div>
    {/if}
  </div>

  <div class="behind">
    <span class="page">Задний силовой бампер Toyota Land Cruiser 100</span>
    <span class="edit">Редактировать</span>
    <span class="rules">посмотрите правила оформления</span>
  </div>

  <div class="taskbar">
    <button class="start" aria-label="Пуск">{@render icon('win', 17)}</button>
    <button class="tview" aria-label="Представление задач">{@render icon('task', 20)}</button>
    {#each tasks as t}
      <button class="app" class:current={t === 'acad'} aria-label={t}>{@render icon(t, 24)}</button>
    {/each}
    <div class="tray">
      {@render icon('up', 14)}
      {@render icon('net', 16)}
      {@render icon('vol', 17)}
      <span>РУС</span>
      <time>9:45<br />30.10.2019</time>
      <button aria-label="Уведомления">{@render icon('note', 17)}</button>
    </div>
  </div>
</div>

{#snippet launcher()}
  <svg class="launcher" width="7" height="7" viewBox="0 0 7 7" aria-hidden="true"><path d="M1 1l4 4M6 2v4H2" fill="none" stroke="#fff" stroke-width="1.200" /></svg>
{/snippet}

<style>
  :global(body) {
    margin: 0;
    background: #000f28;
  }
  .desktop {
    position: relative;
    display: flex;
    flex-direction: column;
    height: 100vh;
    overflow: hidden;
    background: linear-gradient(90deg, #000a1e, #00173a 10px, #00102c 50%, #003060);
    font-family: "Open Sans", "Noto Sans", sans-serif;
    font-size: 11px;
    color: #fff;
  }
  button, input, select {
    font: inherit;
    color: inherit;
    background: none;
    border: 0;
    border-radius: 0;
    padding: 0;
    margin: 0;
    appearance: none;
    outline: none;
  }
  button {
    display: flex;
    align-items: center;
    justify-content: center;
    white-space: nowrap;
    flex: none;
  }
  .icon { flex: none; display: block; }
  i { flex: none; }
  .stray { position: absolute; font-size: 12px; line-height: 16px; left: 2px; color: #cdd5e0; }
  .s1 { top: 73px; left: 7px; }
  .s2 { top: 265px; }
  .s3 { top: 592px; left: 7px; }
  .window {
    position: relative;
    display: flex;
    flex-direction: column;
    flex: 1;
    min-height: 0;
    margin: 2px 9px 0 9px;
    border: 1px solid #3a79b8;
    background: #383838;
  }
  .dd {
    border: 3px solid transparent;
    border-top: 3px solid #fff;
    border-bottom: 0;
    margin: 0 4px;
  }
  .dd.dim { border-top-color: #999; }
  .dd.dark { border-top-color: #222; }
  .tri {
    border: 4px solid transparent;
    border-top: 5px solid #fff;
    border-bottom: 0;
    margin-left: 6px;
  }
  .tri.up { border-top: 0; border-bottom: 5px solid #fff; }
  .tri.up.dark { border-bottom-color: #222; }

  /* caption */
  .caption {
    display: flex;
    height: 31px;
    background: #fff;
    color: #000;
  }
  .qat {
    display: flex;
    align-items: center;
    margin: 7px 0 0 42px;
    height: 24px;
    width: 214px;
    padding-left: 5px;
    box-sizing: border-box;
    background: linear-gradient(#9f9f9f, #7d7d7d);
    border-top: 1px solid #555;
  }
  .qat button { width: 24px; height: 23px; }
  .qat .dd { margin: 0 2px; }
  .qat .end { width: 18px; }
  .qat .hot { background: #6c6c6c; box-shadow: inset 0 0 0 1px #333; }
  .title {
    flex: 1;
    display: flex;
    justify-content: center;
    gap: 18px;
    padding-right: 8px;
    line-height: 30px;
  }
  .infocenter {
    display: flex;
    align-items: center;
    margin: 7px 0 0;
    height: 23px;
    width: 446px;
    background: linear-gradient(#9f9f9f, #7d7d7d);
    border-top: 1px solid #555;
    color: #fff;
  }
  .play { border: 4px solid transparent; border-left: 5px solid #fff; border-right: 0; margin: 0 4px; }
  .infocenter input {
    width: 172px;
    height: 21px;
    padding: 0 3px;
    background: #747474;
    border: 1px solid #333;
    font-style: italic;
  }
  .infocenter input::placeholder { color: #d8d8d8; opacity: 1; }
  .infocenter button { margin-left: 4px; height: 23px; }
  .infocenter .login { gap: 5px; margin-left: 8px; }
  .infocenter .login .dd { margin-left: -1px; }
  .infocenter .wide { margin-left: 8px; }
  .infocenter .helpbtn { margin-left: 6px; padding-left: 8px; border-left: 1px solid #999; }
  .winctl { display: flex; margin-left: 25px; }
  .winctl button { width: 46px; height: 28px; }
  .appbtn {
    position: absolute;
    left: 0;
    top: 7px;
    width: 41px;
    height: 41px;
    background: linear-gradient(#d5d5d5, #8b8b8b);
    border: 1px solid #111;
  }
  .appbtn .dd { margin: 4px 0 0 2px; border-width: 4px; border-top-width: 5px; border-bottom: 0; }

  .menubar {
    display: flex;
    gap: 1px;
    height: 21px;
    padding: 0 0 2px 42px;
    background: linear-gradient(#a3a3a3, #5c5c5c);
    border-top: 1px solid #333;
    box-sizing: border-box;
  }
  .menubar button { padding: 0 12px; }
  .mdi { margin-left: auto; padding: 3px 4px 0 0; }
  .rtabs {
    display: flex;
    align-items: flex-end;
    gap: 1px;
    height: 21px;
    padding-left: 3px;
    background: #535353;
    border-top: 1px solid #333;
    border-bottom: 1px solid #333;
    box-sizing: border-box;
    color: #d6d6d6;
  }
  .rtabs button { padding: 0 10px; height: 20px; }
  .rtabs .active {
    height: 18px;
    padding: 0 8px;
    margin: 0 2px;
    color: #fff;
    background: linear-gradient(#7c7c7c, #5d5d5d);
    border: 1px solid #333;
    border-bottom: 0;
  }

  /* ribbon */
  .ribbon {
    display: flex;
    height: 97px;
    background: linear-gradient(90deg, #4c4c4c, #414141);
    border-bottom: 1px solid #8a8a8a;
  }
  .panel {
    display: flex;
    flex-direction: column;
    background: #5d5d5d;
    border-right: 1px solid #3c3c3c;
    box-sizing: border-box;
    box-shadow: inset 1px 0 #6c6c6c;
  }
  .p-tools { width: 198px; }
  .p-views { width: 198px; }
  .p-style { width: 233px; }
  .p-vports { width: 233px; }
  .p-pal { width: 293px; }
  .p-ui { width: 315px; }
  .body { display: flex; height: 79px; box-sizing: border-box; padding-top: 4px; }
  .panel footer {
    position: relative;
    flex: 1;
    display: flex;
    align-items: center;
    justify-content: center;
    padding-bottom: 2px;
    background: linear-gradient(#474747, #555);
  }
  .panel .launch { padding-right: 12px; }
  .launcher { position: absolute; right: 5px; bottom: 5px; }
  .big {
    flex-direction: column;
    justify-content: flex-start;
    height: 72px;
    padding: 4px 3px 0;
    box-sizing: border-box;
    line-height: 15px;
    gap: 4px;
  }
  .big.on {
    background: linear-gradient(#8fb0df, #6484b8 40%, #4a628c);
    box-shadow: inset 0 0 0 1px #2a3c5f;
  }
  .p-tools .body { padding-left: 30px; }
  .p-tools .big { width: 38px; }
  .p-tools .big:last-child { width: 64px; }
  .gallery {
    display: flex;
    width: 123px;
    height: 62px;
    margin: 5px 6px 0 2px;
    box-sizing: border-box;
    border: 1px solid #333;
  }
  .items { flex: 1; display: flex; flex-direction: column; background: #4f4f4f; }
  .items button { height: 20px; justify-content: flex-start; gap: 2px; padding-left: 3px; }
  .scroll { width: 14px; display: flex; flex-direction: column; background: #6a6a6a; }
  .scroll button { height: 20px; border-bottom: 1px solid #333; box-sizing: border-box; }
  .scroll .tri { margin: 0; }
  .p-views .big { width: 64px; }
  .body.col { flex-direction: column; padding: 5px 0 0 3px; gap: 4px; }
  .combo {
    display: flex;
    align-items: center;
    width: 200px;
    height: 22px;
    box-sizing: border-box;
    padding: 0 5px 0 3px;
    border: 1px solid #2e2e2e;
    background: linear-gradient(#565656, #707070);
  }
  .combo select { flex: 1; padding-left: 3px; }
  .row { display: flex; align-items: center; height: 20px; gap: 8px; padding-left: 4px; }
  .row .dd { margin: 0 0 0 5px; }
  .slider {
    display: flex;
    width: 199px;
    height: 20px;
    box-sizing: border-box;
    border: 1px solid #484848;
    line-height: 18px;
    color: #9b9b9b;
    background: #5a5a5a;
  }
  .slider span { width: 98px; padding-left: 4px; background: #828282; }
  .slider b { margin-left: auto; width: 24px; text-align: center; font-weight: 400; border-left: 1px solid #484848; }
  .side { align-self: center; margin: 12px 4px 0 0; }
  .list { display: flex; flex-direction: column; margin-left: 6px; }
  .list button { height: 24px; gap: 5px; justify-content: flex-start; }
  .p-vports .big { width: 98px; margin-left: 10px; }
  .p-pal .big:nth-child(1) { width: 120px; }
  .p-pal .big:nth-child(2) { width: 57px; }
  .p-pal .big:nth-child(3) { width: 65px; }
  .six { display: grid; grid-template-columns: 24px 24px; grid-auto-rows: 24px; }
  .six .on { background: #5f7fb3; box-shadow: inset 0 0 0 1px #2a3c5f; }
  .p-ui .big { width: 50px; }
  .p-ui .big:first-child { width: 90px; margin-left: 4px; }
  .p-ui .side { margin: 12px 0 0; }
  .p-ui .list { margin-left: 5px; }

  .doctabs {
    display: flex;
    align-items: flex-end;
    height: 26px;
    padding-left: 18px;
    background: #383838;
    color: #bcbcbc;
  }
  .doctabs button {
    height: 21px;
    width: 130px;
    margin-right: -4px;
    padding: 0 14px;
    box-sizing: border-box;
    justify-content: flex-start;
    background: linear-gradient(#5a5a5a, #4c4c4c);
    clip-path: polygon(0 100%, 4px 85%, 9px 10%, 12px 0, calc(100% - 12px) 0, calc(100% - 9px) 10%, calc(100% - 3px) 85%, 100% 100%);
  }
  .doctabs .active { color: #fff; background: linear-gradient(#8a8a8a, #606060); }
  .doctabs .x { margin-left: auto; color: #333; font-size: 11px; font-weight: 700; }
  .doctabs .add {
    width: 22px;
    height: 16px;
    margin: 0 0 2px 8px;
    padding: 0;
    justify-content: center;
    font-size: 15px;
    clip-path: none;
    border-radius: 4px 8px 3px 8px;
    background: #525252;
    color: #ddd;
  }

  main {
    display: flex;
    flex: 1;
    min-height: 0;
    background: #5d5d5d;
    border-bottom: 1px solid #8a8a8a;
    box-sizing: border-box;
  }
  aside { width: 339px; padding: 5px 13px 0 17px; box-sizing: border-box; flex: none; }
  h2 {
    margin: 0 -11px 12px -13px;
    padding-left: 11px;
    font-size: 12px;
    line-height: 19px;
    font-weight: 400;
    background: #525252;
  }
  .pick { display: flex; height: 24px; margin: 13px 0 3px; }
  .pick select {
    width: 223px;
    flex: none;
    padding-left: 4px;
    border: 1px solid #333;
    background: linear-gradient(#5d5d5d, #777);
  }
  .drop { display: flex; align-items: center; justify-content: center; flex: none; width: 14px; background: #6e6e6e; border: 1px solid #333; border-left: 0; box-sizing: border-box; }
  .drop .tri { margin: 0; border-width: 3px; border-top-width: 4px; border-bottom: 0; }
  .pick button { width: 24px; }
  .drop + button { margin-left: 3px; }
  .cat {
    justify-content: space-between;
    width: 100%;
    height: 20px;
    box-sizing: border-box;
    padding: 0 7px 0 6px;
    background: #474747;
    border: 1px solid #333;
    font-weight: 700;
  }
  .cat i { width: 6px; height: 2px; background: #fff; }
  table {
    width: 292px;
    margin: 0 0 2px 17px;
    border-collapse: collapse;
    table-layout: fixed;
  }
  th, td {
    height: 19px;
    padding: 0;
    box-sizing: border-box;
    border: 1px solid #505050;
    border-top: 0;
    font-weight: 400;
    text-align: left;
    white-space: pre;
    overflow: hidden;
    line-height: 17px;
  }
  th { width: 133px; padding-left: 6px; }
  td { padding-left: 2px; white-space: nowrap; }
  td.dim { color: #b0b0b0; }
  .swatch { display: inline-block; width: 8px; height: 8px; margin: 0 4px 0 1px; background: #fff; border: 1px solid #000; vertical-align: -1px; }
  .ltype { display: inline-block; width: 64px; height: 1px; margin: 0 4px 4px 1px; background: #fff; }

  .viewport { position: relative; flex: 1; min-width: 0; margin-top: 4px; background: #222830; }
  .scene { position: absolute; inset: 0; width: 100%; height: 100%; }
  .vlabel { position: absolute; left: 4px; top: 5px; margin: 0; line-height: 16px; }
  .ucsname {
    position: absolute;
    right: 45px;
    top: 168px;
    width: 75px;
    height: 18px;
    gap: 5px;
    border-radius: 4px;
    background: #9a9ba6;
    color: #4c4e58;
    font-size: 10px;
  }
  .ucsname i { border: 4px solid transparent; border-top-color: #c0c1ca; border-bottom: 0; }
  .cmd {
    position: absolute;
    left: 30%;
    right: 30%;
    margin-right: -4px;
    margin-left: -4px;
    bottom: 0;
    display: flex;
    align-items: center;
    height: 25px;
    background: #5a5a5a;
  }
  .grip { width: 4px; height: 18px; margin-left: 4px; background: repeating-linear-gradient(#888 0 1px, #5a5a5a 1px 3px); }
  .cmd button { width: 23px; }
  .cmd .close { font-size: 14px; color: #ddd; }
  .cmd label {
    flex: 1;
    display: flex;
    align-items: center;
    height: 25px;
    padding: 0 4px;
    background: #bdbdbd;
  }
  .cmd label input { flex: 1; font-style: italic; padding-left: 3px; }
  .cmd label input::placeholder { color: #666; opacity: 1; }

  .bottom { display: flex; justify-content: space-between; height: 29px; background: #373737; }
  .layouts { display: flex; align-items: flex-start; padding-left: 11px; }
  .layouts button {
    height: 17px;
    width: 70px;
    margin-right: -4px;
    background: linear-gradient(#505050, #5a5a5a);
    color: #aaa;
    clip-path: polygon(0 0, 100% 0, calc(100% - 7px) 85%, calc(100% - 10px) 100%, 10px 100%, 7px 85%);
  }
  .layouts button:nth-child(2) { width: 60px; }
  .layouts .active { background: linear-gradient(#555, #888); color: #fff; font-weight: 700; }
  .layouts .add { width: 22px; margin-left: 6px; clip-path: none; border-radius: 8px 2px 8px 4px; font-size: 15px; color: #ddd; }
  .status {
    display: flex;
    height: 28px;
    background: #474747;
    border: 1px solid #5e5e5e;
    border-width: 1px 0;
    box-sizing: border-box;
  }
  .status button { box-sizing: border-box; gap: 3px; }
  .status .end { border-right: 1px solid #777; }
  .status .tri { margin: 0; border-width: 3px; border-top-width: 5px; border-bottom: 0; }
  .status .model { width: 58px; border: 1px solid #777; font-size: 12px; }

  .balloon {
    position: absolute;
    right: 47px;
    bottom: 35px;
    width: 334px;
    height: 80px;
    box-sizing: border-box;
    padding: 8px 8px 0 14px;
    border: 1px solid #000;
    border-radius: 14px;
    background: #ffffe1;
    color: #000;
  }
  .head { display: flex; align-items: center; height: 17px; margin-left: -5px; gap: 10px; }
  .head button {
    width: 16px;
    height: 16px;
    margin-left: auto;
    border: 1px solid #777;
    background: #f4f4f4;
    color: #000;
    font-size: 13px;
    font-weight: 700;
  }
  .balloon p { margin: 5px 0 5px; line-height: 16px; }
  .balloon a { color: #00c; line-height: 16px; }
  .tail { position: absolute; left: 233px; top: 77px; }

  .behind {
    display: flex;
    align-items: flex-end;
    height: 7px;
    margin: 0 50px 0 300px;
    overflow: hidden;
    flex: none;
    background: #ececec;
    color: #333;
    font-size: 17px;
    line-height: 15px;
    white-space: nowrap;
  }
  .behind .page { width: 632px; padding-left: 101px; }
  .behind .edit { width: 153px; text-align: center; background: #ddd; }
  .behind .rules { margin-left: 271px; width: 314px; text-align: center; font-size: 14px; background: #222; color: #bbb; }

  .taskbar {
    display: flex;
    height: 40px;
    flex: none;
    background:
      linear-gradient(#121212, #121212) 1457px 0 / 314px 12px no-repeat,
      linear-gradient(#1e1e1e, #1e1e1e) 1033px 0 / 153px 13px no-repeat,
      linear-gradient(90deg, #000 300px, #252525 300px);
  }
  .start { width: 47px; }
  .tview { width: 51px; }
  .app { width: 49px; position: relative; }
  .app::after { content: ''; position: absolute; left: 5px; right: 4px; bottom: 0; height: 2px; background: #76b0e8; }
  .app.current { background: #3a3d40; }
  .app.current::after { left: 0; right: 0; }
  .tray { margin-left: auto; display: flex; align-items: center; gap: 9px; font-size: 12px; }
  time { width: 60px; text-align: center; line-height: 18px; font-size: 11px; }
  .tray button { width: 48px; height: 40px; background: #000; padding-right: 14px; box-sizing: border-box; }
  .tray time + button { margin-left: -2px; }
</style>
